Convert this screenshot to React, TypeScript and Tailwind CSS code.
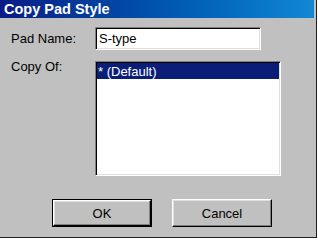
import React from "react";

const font = { fontFamily: '"Liberation Sans", Arial, sans-serif' };

export default function App() {
  return (
    <div className="w-[318px] h-[240px] bg-white" style={font}>
      <div className="w-[317px] h-[238px] bg-[#c0c0c0] border-r border-b border-[#202020] flex flex-col">
        <div className="w-[314px] h-[18px] bg-gradient-to-r from-[#0a1a86] to-[#1288d4] flex items-center pl-[4px]">
          <span className="text-white font-bold text-[14.5px] leading-none">Copy Pad Style</span>
        </div>
        <div className="flex items-center mt-[9px] pl-[11px]">
          <span className="w-[84px] text-[13px] text-black leading-none">Pad Name:</span>
          <div className="w-[166px] h-[23px] bg-white border border-t-[#808080] border-l-[#808080] border-b-white border-r-white shadow-[inset_1px_1px_0_#000,inset_-1px_-1px_0_#dfdfdf] flex items-center pl-[3px]">
            <span className="text-[13px] text-black leading-none">S-type</span>
          </div>
        </div>
        <div className="flex items-start mt-[9px] pl-[11px]">
          <span className="w-[84px] text-[13px] text-black leading-[15px]">Copy Of:</span>
          <div className="mt-[2px] w-[186px] h-[115px] bg-white border border-t-[#808080] border-l-[#808080] border-b-white border-r-white shadow-[inset_1px_1px_0_#000,inset_-1px_-1px_0_#dfdfdf] p-[1px]">
            <div className="h-[16px] bg-[#0a1e78] flex items-center pl-[1px]">
              <span className="text-white text-[13px] leading-none">* (Default)</span>
            </div>
          </div>
        </div>
        <div className="flex mt-[23px] pl-[52px] gap-[20px]">
          <div className="w-[100px] h-[28px] border border-black">
            <div className="w-full h-full bg-[#c0c0c0] border border-t-white border-l-white border-b-black border-r-black shadow-[inset_-1px_-1px_0_#808080,inset_1px_1px_0_#dfdfdf] flex items-center justify-center">
              <span className="text-[13px] text-black leading-none">OK</span>
            </div>
          </div>
          <div className="w-[100px] h-[28px] bg-[#c0c0c0] border border-t-white border-l-white border-b-black border-r-black shadow-[inset_-1px_-1px_0_#808080,inset_1px_1px_0_#dfdfdf] flex items-center justify-center">
            <span className="text-[13px] text-black leading-none">Cancel</span>
          </div>
        </div>
      </div>
    </div>
  );
}
